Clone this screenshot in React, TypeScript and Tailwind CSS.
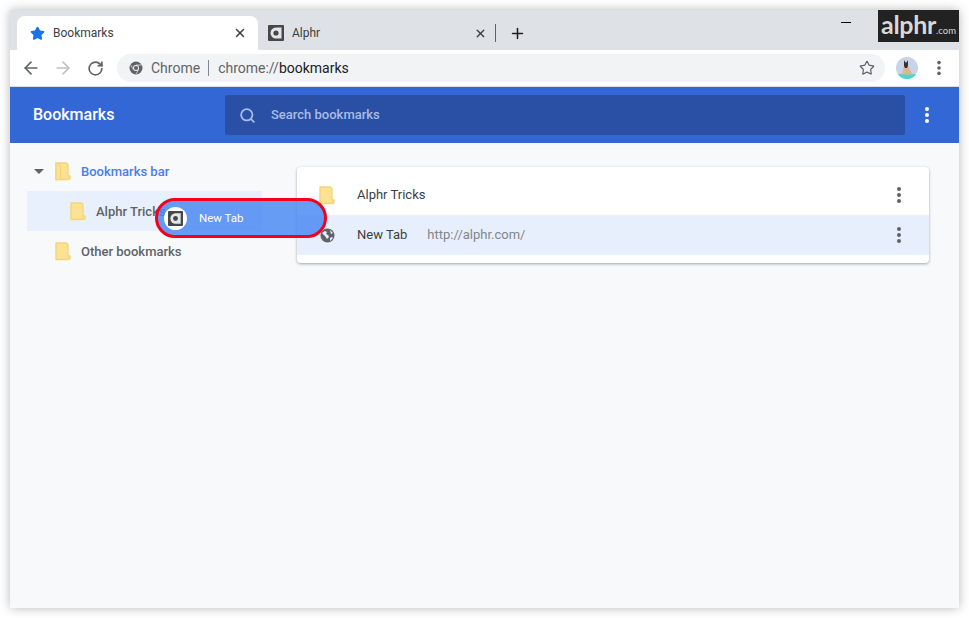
import { ArrowLeft, ArrowRight, RotateCw, Star, X, Plus, Search } from 'lucide-react';

function Dots({ className }: { className: string }) {
  return (
    <div className={`flex flex-col gap-[2px] ${className}`}>
      <span className="w-[4px] h-[4px] rounded-full bg-current" />
      <span className="w-[4px] h-[4px] rounded-full bg-current" />
      <span className="w-[4px] h-[4px] rounded-full bg-current" />
    </div>
  );
}

function Folder({ open }: { open?: boolean }) {
  return (
    <svg width="16" height="19" viewBox="0 0 16 19" className="shrink-0">
      <path d="M1 1h10.5l1.5 1.5V14h2v3h-2v.5H1z" fill="#fde293" stroke="#f6d479" strokeWidth="1.4" strokeLinejoin="round" />
      {open && <path d="M1 1l4.5 3v13L1 18z" fill="#fde293" stroke="#f6d479" strokeWidth="1.2" strokeLinejoin="round" />}
    </svg>
  );
}

function AlphrIcon({ size }: { size: number }) {
  return (
    <svg width={size} height={size} viewBox="0 0 16 16" className="shrink-0">
      <rect width="16" height="16" rx="1" fill="#45474a" />
      <path d="M8 2.5h5.5V13.5H8a5.5 5.5 0 0 1 0-11z" fill="#e6e6e6" />
      <circle cx="8" cy="8" r="2.6" fill="#45474a" />
    </svg>
  );
}

function ChromeIcon() {
  return (
    <svg width="14" height="14" viewBox="0 0 14 14" className="shrink-0">
      <circle cx="7" cy="7" r="6.5" fill="#5f6368" />
      <circle cx="7" cy="7" r="3" fill="#f1f3f4" />
      <circle cx="7" cy="7" r="2.1" fill="#5f6368" />
      <path d="M7 4h5.6M4.4 8.5 1.8 4M9.6 8.5 7 13" stroke="#f1f3f4" strokeWidth="0.7" />
    </svg>
  );
}

function Avatar() {
  return (
    <svg width="22" height="22" viewBox="0 0 22 22" className="shrink-0">
      <clipPath id="avatar-clip"><circle cx="11" cy="11" r="11" /></clipPath>
      <g clipPath="url(#avatar-clip)">
        <rect width="22" height="22" fill="#c9d3e8" />
        <rect y="17" width="22" height="5" fill="#4fd6c8" />
        <path d="M8 9h4l2 4 3 4.5H6l1-4z" fill="#dcb595" />
        <path d="M8 3l1.5 2.5h1L12 3v6l-1 2H9L8 9z" fill="#3a3230" />
      </g>
    </svg>
  );
}

function Globe() {
  return (
    <svg width="15" height="15" viewBox="0 0 15 15" className="shrink-0">
      <circle cx="7.5" cy="7.5" r="7" fill="#5f6368" />
      <path d="M2 5l3-2 2 1-1 2 2 1 1 2-2 2-2-3zM10 2l3 3-2 1zM10 10l2-1 1 1-3 3z" fill="#e8f0fe" />
    </svg>
  );
}

export default function App() {
  return (
    <div className="w-[969px] h-[618px] bg-white p-[10px] overflow-hidden font-['Roboto',sans-serif]">
      <div className="relative w-[949px] h-[598px] flex flex-col bg-[#f8f9fa] shadow-[0_0_10px_rgba(0,0,0,0.28)]">
        {/* Tab strip */}
        <div className="h-[40px] bg-[#dee1e6] flex items-end pl-[7px] shrink-0">
          <div className="w-[241px] h-[34px] bg-white rounded-t-[8px] flex items-center pl-[13px] pr-[11px]">
            <Star size={15} className="text-[#1a73e8] fill-[#1a73e8]" />
            <span className="ml-[8px] text-[12px] text-[#3c4043]">Bookmarks</span>
            <X size={14} strokeWidth={2.5} className="ml-auto text-[#3c4043]" />
          </div>
          <div className="w-[238px] h-[34px] flex items-center pl-[10px]">
            <AlphrIcon size={16} />
            <span className="ml-[8px] text-[12px] text-[#3c4043]">Alphr</span>
            <X size={13} strokeWidth={2.5} className="ml-auto text-[#3c4043]" />
            <span className="ml-[8px] w-px h-[18px] bg-[#5f6368]" />
          </div>
          <div className="h-[34px] flex items-center ml-[13px]">
            <Plus size={17} strokeWidth={2.2} className="text-[#202124]" />
          </div>
        </div>

        {/* Window controls and watermark */}
        <span className="absolute left-[831px] top-[12px] w-[10px] h-px bg-black" />
        <div className="absolute right-0 top-0 w-[81px] h-[32px] bg-[#222222] flex items-baseline justify-center leading-[29px] font-['Lato',sans-serif] text-[#d8d8d8]">
          <span className="text-[25px] font-bold tracking-[-0.3px]">alphr</span>
          <span className="text-[9.5px]">.com</span>
        </div>

        {/* Toolbar */}
        <div className="h-[37px] bg-white border-b border-[#dadce0] flex items-center pl-[11px] shrink-0">
          <ArrowLeft size={20} className="text-[#5f6368]" />
          <ArrowRight size={20} className="ml-[12px] text-[#bdc1c6]" />
          <RotateCw size={17} strokeWidth={2.4} className="ml-[14px] text-[#5f6368]" />
          <div className="ml-[13px] w-[768px] h-[28px] mt-[-1px] rounded-full bg-[#f1f3f4] flex items-center pl-[12px] pr-[10px]">
            <ChromeIcon />
            <span className="ml-[8px] mt-[2px] text-[14px] text-[#5f6368]">Chrome</span>
            <span className="ml-[8px] w-px h-[16px] bg-[#80868b]" />
            <span className="ml-[9px] mt-[2px] text-[14px] text-[#5f6368]">chrome://<span className="text-[#202124]">bookmarks</span></span>
            <Star size={16} strokeWidth={1.8} className="ml-auto text-[#5f6368]" />
          </div>
          <div className="ml-[11px]"><Avatar /></div>
          <Dots className="ml-[19px] text-[#5f6368] scale-90" />
        </div>

        {/* Bookmarks header */}
        <div className="h-[56px] bg-[#3367d6] flex items-center pl-[23px] shrink-0">
          <h1 className="w-[192px] text-[16px] font-medium text-white">Bookmarks</h1>
          <div className="w-[680px] h-[40px] rounded-[2px] bg-[#2a50a5] flex items-center pl-[14px]">
            <Search size={17} strokeWidth={2.5} className="text-[#a8bde8]" />
            <span className="ml-[15px] text-[13px] font-medium text-[#a9bce6]">Search bookmarks</span>
          </div>
          <Dots className="ml-[20px] text-white" />
        </div>

        {/* Main */}
        <div className="flex-1 flex min-h-0">
          <nav className="w-[270px] ml-[17px] pt-[8px] shrink-0">
            <div className="h-[40px] flex items-center">
              <span className="ml-[7px] w-0 h-0 border-x-[5px] border-x-transparent border-t-[5px] border-t-[#5f6368]" />
              <span className="ml-[11px]"><Folder open /></span>
              <span className="ml-[10px] mt-[2px] text-[13px] font-medium text-[#4a7cf0]">Bookmarks bar</span>
            </div>
            <div className="w-[235px] h-[40px] bg-[#e8f0fe] flex items-center pl-[43px]">
              <Folder />
              <span className="ml-[10px] mt-[2px] text-[13px] font-medium text-[#5f6368]">Alphr Tricks</span>
            </div>
            <div className="h-[40px] flex items-center pl-[28px]">
              <Folder />
              <span className="ml-[10px] mt-[2px] text-[13px] font-medium text-[#5f6368]">Other bookmarks</span>
            </div>
          </nav>

          <div className="pt-[24px]">
            <div className="w-[632px] h-[96px] py-[8px] bg-white rounded-[4px] shadow-[0_1px_3px_rgba(60,64,67,0.45)]">
              <div className="h-[40px] flex items-center pl-[22px] pr-[28px]">
                <Folder />
                <span className="ml-[22px] text-[13px] text-[#3c4043]">Alphr Tricks</span>
                <Dots className="ml-auto text-[#5f6368]" />
              </div>
              <div className="h-[40px] bg-[#e8effc] flex items-center pl-[23px] pr-[28px]">
                <Globe />
                <span className="ml-[22px] text-[13px] text-[#3c4043]">New Tab</span>
                <span className="ml-[20px] text-[13px] text-[#80868b]">http://alphr.com/</span>
                <Dots className="ml-auto text-[#5f6368]" />
              </div>
            </div>
          </div>
        </div>

        {/* Drag ghost with annotation ring */}
        <div className="absolute left-[145px] top-[188px] w-[172px] h-[40px] rounded-full border-[3.5px] border-[#f4001c] bg-[#4285f4]/80 flex items-center pl-[6px]">
          <span className="w-[23px] h-[23px] rounded-full bg-white flex items-center justify-center">
            <AlphrIcon size={15} />
          </span>
          <span className="ml-[12px] mt-[1px] text-[11.5px] text-white">New Tab</span>
        </div>
      </div>
    </div>
  );
}
